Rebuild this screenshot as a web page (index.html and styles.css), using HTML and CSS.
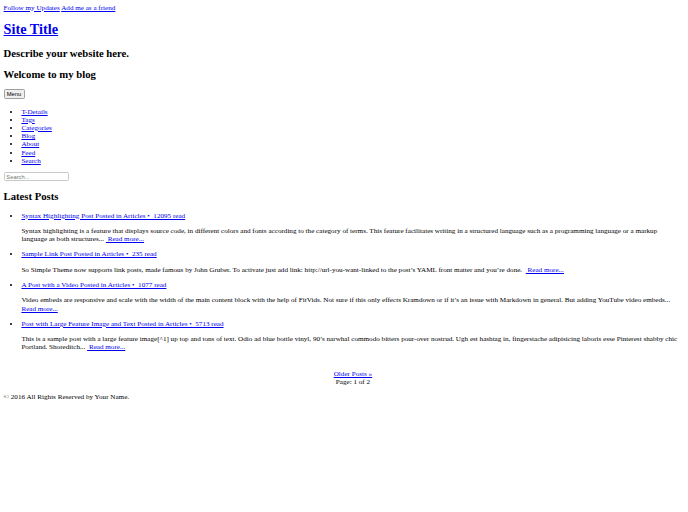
FILE: index.html
```html
<!DOCTYPE html>
<html>
<head>
<meta charset="utf-8">
<title>Site Title</title>
<link rel="stylesheet" href="styles.css">
</head>
<body class="doc">
<div class="page">
  <div class="social"><a href="#">Follow my Updates</a> <a href="#">Add me as a friend</a></div>
  <h1><a href="#">Site Title</a></h1>
  <h2>Describe your website here.</h2>
  <h2>Welcome to my blog</h2>
  <button class="menu-btn">Menu</button>
  <ul class="nav">
    <li><a href="#">T-Details</a></li>
    <li><a href="#">Tags</a></li>
    <li><a href="#">Categories</a></li>
    <li><a href="#">Blog</a></li>
    <li><a href="#">About</a></li>
    <li><a href="#">Feed</a></li>
    <li><a href="#">Search</a></li>
  </ul>
  <input class="search" type="text" placeholder="Search...">
  <h2>Latest Posts</h2>
  <ul class="posts">
    <li>
      <a href="#">Syntax Highlighting Post Posted in Articles •&nbsp; 12095 read</a>
      <p>Syntax highlighting is a feature that displays source code, in different colors and fonts according to the category of terms. This feature facilitates writing in a structured language such as a programming language or a markup language as both structures... <a href="#">&nbsp;Read more...</a></p>
    </li>
    <li>
      <a href="#">Sample Link Post Posted in Articles •&nbsp; 235 read</a>
      <p>So Simple Theme now supports link posts, made famous by John Gruber. To activate just add link: http://url-you-want-linked to the post’s YAML front matter and you’re done. &nbsp;<a href="#">&nbsp;Read more...</a></p>
    </li>
    <li>
      <a href="#">A Post with a Video Posted in Articles •&nbsp; 1077 read</a>
      <p>Video embeds are responsive and scale with the width of the main content block with the help of FitVids. Not sure if this only effects Kramdown or if it’s an issue with Markdown in general. But adding YouTube video embeds... <a href="#">Read more...</a></p>
    </li>
    <li>
      <a href="#">Post with Large Feature Image and Text Posted in Articles •&nbsp; 5713 read</a>
      <p>This is a sample post with a large feature image[^1] up top and tons of text. Odio ad blue bottle vinyl, 90’s narwhal commodo bitters pour-over nostrud. Ugh est hashtag in, fingerstache adipisicing laboris esse Pinterest shabby chic Portland. Shoreditch... <a href="#">&nbsp;Read more...</a></p>
    </li>
  </ul>
  <ul class="pager">
    <li><a href="#">Older Posts »</a><br>Page: 1 of 2</li>
  </ul>
  <div class="footer">© 2016 All Rights Reserved by Your Name.</div>
</div>
</body>
</html>
```
FILE: styles.css
```css
.doc {
  margin: 0;
  background: #fff;
}
.page {
  zoom: 0.446;
  padding: 8px;
  font-family: "Liberation Serif", "Times New Roman", serif;
  font-size: 16px;
  line-height: 1.15;
  color: #000;
}
.page a {
  color: #0000ee;
}
.page h1 {
  font-size: 32px;
  margin: 21px 0;
}
.page h2 {
  font-size: 24px;
  margin: 20px 0;
}
.menu-btn {
  font-family: "Liberation Sans", Arial, sans-serif;
  font-size: 13px;
  height: 21px;
  width: 47px;
  padding: 0;
  border: 1px solid #a0a0a0;
  border-radius: 3px;
  background: #efefef;
}
.nav {
  margin: 20px 0 16px;
  padding-left: 40px;
}
.search {
  box-sizing: border-box;
  width: 146px;
  height: 21px;
  padding: 1px 4px;
  border: 2px solid #c8c8c8;
  border-radius: 3px;
  font-family: "Liberation Sans", Arial, sans-serif;
  font-size: 13px;
}
.posts {
  padding-left: 40px;
  margin: 20px 0 16px;
}
.posts p {
  margin: 16px 0;
}
.pager {
  list-style: none;
  text-align: center;
  padding-left: 40px;
  margin: 40px 0 16px;
}
.footer {
  margin-top: 16px;
}
```
